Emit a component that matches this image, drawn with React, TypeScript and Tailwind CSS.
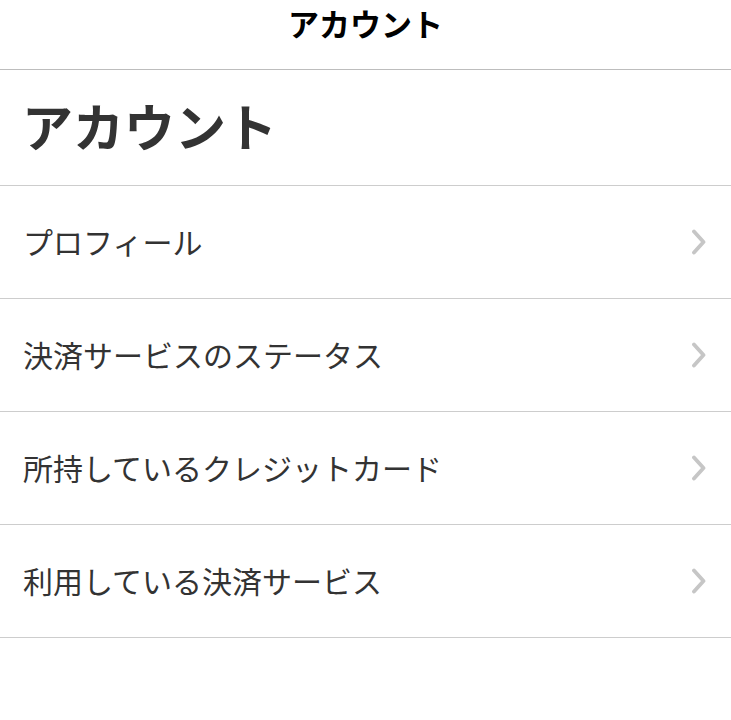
import React from "react";

const items = [
  "プロフィール",
  "決済サービスのステータス",
  "所持しているクレジットカード",
  "利用している決済サービス",
];

function Chevron() {
  return (
    <svg width="16" height="26" viewBox="0 0 16 26" fill="none" className="shrink-0 -mt-[1px]">
      <path d="M3 2.5 L12.5 13 L3 23.5" stroke="#c6c6c6" strokeWidth="3.8" strokeLinecap="round" strokeLinejoin="round" />
    </svg>
  );
}

export default function App() {
  return (
    <div
      className="w-[731px] h-[720px] bg-white"
      style={{ fontFamily: '"Noto Sans CJK JP", "Noto Sans", sans-serif' }}
    >
      <div className="h-[70px] border-b border-[#bdbdbd] flex justify-center">
        <div className="text-[31px] leading-[48px] font-bold text-black -mt-[1px]">アカウント</div>
      </div>
      <div className="h-[116px] border-b border-[#cdcdcd] flex items-center pl-[22px]">
        <h1 className="text-[51px] leading-none font-bold text-[#333333] -mt-[4px]">アカウント</h1>
      </div>
      {items.map((t) => (
        <div
          key={t}
          className="h-[113px] border-b border-[#cdcdcd] flex items-center justify-between pl-[23px] pr-[24px]"
        >
          <span className="text-[30px] leading-none text-[#333333] -mt-[3px]">{t}</span>
          <Chevron />
        </div>
      ))}
    </div>
  );
}
